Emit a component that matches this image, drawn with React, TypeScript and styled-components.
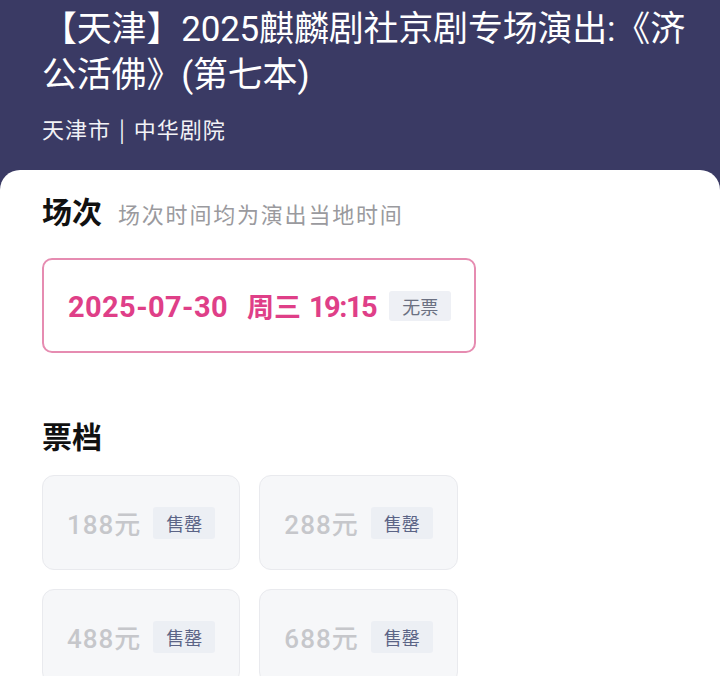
import React from "react";
import styled, { createGlobalStyle } from "styled-components";

const GlobalStyle = createGlobalStyle`
  html, body {
    margin: 0;
    padding: 0;
    background: #3a3a64;
  }
  body {
    font-family: Roboto, "Noto Sans CJK SC", "Noto Sans", sans-serif;
  }
`;

interface Ticket {
  price: number;
  status: string;
}

const tickets: Ticket[] = [
  { price: 188, status: "售罄" },
  { price: 288, status: "售罄" },
  { price: 488, status: "售罄" },
  { price: 688, status: "售罄" },
];

const App: React.FC = () => {
  return (
    <Page>
      <GlobalStyle />
      <Header>
        <Title>【天津】2025麒麟剧社京剧专场演出:《济公活佛》(第七本)</Title>
        <Venue>天津市 | 中华剧院</Venue>
      </Header>
      <Sheet>
        <SectionHead>
          <SectionTitle>场次</SectionTitle>
          <SectionNote>场次时间均为演出当地时间</SectionNote>
        </SectionHead>
        <SessionBox>
          <SessionText>
            <DatePart>2025-07-30</DatePart>
            <WeekPart>周三</WeekPart>
            <TimePart>19:15</TimePart>
          </SessionText>
          <Tag>无票</Tag>
        </SessionBox>
        <SectionHead $top={62}>
          <SectionTitle>票档</SectionTitle>
        </SectionHead>
        <TicketGrid>
          {tickets.map((t) => (
            <TicketCard key={t.price}>
              <Price>{t.price}元</Price>
              <SoldTag>{t.status}</SoldTag>
            </TicketCard>
          ))}
        </TicketGrid>
      </Sheet>
    </Page>
  );
};

export default App;

const Page = styled.div`
  width: 720px;
  height: 676px;
  overflow: hidden;
  background: #3a3a64;
`;

const Header = styled.div`
  padding: 7px 0 0 42px;
  height: 170px;
  box-sizing: border-box;
`;

const Title = styled.h1`
  margin: 0;
  width: 662px;
  color: #ffffff;
  font-family: Roboto, "Noto Sans CJK SC", sans-serif;
  font-weight: 400;
  font-size: 35px;
  line-height: 46px;
  letter-spacing: -0.2px;
`;

const Venue = styled.div`
  margin-top: 14px;
  color: #f2f2f6;
  font-size: 22px;
  line-height: 30px;
  letter-spacing: 1px;
  font-family: "Noto Sans CJK SC", sans-serif;
  word-spacing: 2px;
`;

const Sheet = styled.div`
  background: #ffffff;
  border-radius: 20px 20px 0 0;
  padding: 20px 42px 0 42px;
  min-height: 520px;
`;

const SectionHead = styled.div<{ $top?: number }>`
  display: flex;
  align-items: baseline;
  gap: 16px;
  margin-top: ${({ $top }) => $top ?? 0}px;
`;

const SectionTitle = styled.h2`
  margin: 0;
  font-family: "Noto Sans CJK SC", sans-serif;
  font-size: 30px;
  line-height: 40px;
  font-weight: 700;
  color: #111111;
`;

const SectionNote = styled.span`
  font-family: "Noto Sans CJK SC", sans-serif;
  font-size: 22px;
  color: #9a9a9e;
  letter-spacing: 1.8px;
`;

const SessionBox = styled.div`
  margin-top: 28px;
  display: inline-flex;
  align-items: center;
  gap: 13px;
  height: 95px;
  box-sizing: border-box;
  padding: 0 23px 0 24px;
  border: 2px solid #e68cb1;
  border-radius: 10px;
`;

const SessionText = styled.span`
  display: inline-flex;
  align-items: baseline;
  color: #df3f88;
  font-family: Roboto, "Noto Sans CJK SC", sans-serif;
  font-size: 29px;
  font-weight: 700;
`;

const DatePart = styled.span`
  letter-spacing: 0.4px;
  margin-right: 19px;
`;

const WeekPart = styled.span`
  font-family: "Noto Sans CJK SC", sans-serif;
  font-size: 27px;
  margin-right: 8px;
`;

const TimePart = styled.span`
  letter-spacing: -1.5px;
`;

const Tag = styled.span`
  background: #eef0f5;
  color: #6b7082;
  font-family: "Noto Sans CJK SC", sans-serif;
  font-size: 18px;
  line-height: 30px;
  padding: 0 13px;
  border-radius: 3px;
`;

const TicketGrid = styled.div`
  margin-top: 20px;
  display: flex;
  flex-wrap: wrap;
  gap: 19px;
  width: 450px;
`;

const TicketCard = styled.div`
  display: inline-flex;
  align-items: center;
  gap: 12px;
  height: 95px;
  box-sizing: border-box;
  padding: 0 24px;
  background: #f6f7f9;
  border: 1px solid #e9eaee;
  border-radius: 12px;
`;

const Price = styled.span`
  color: #c6c7cb;
  font-family: Roboto, "Noto Sans CJK SC", sans-serif;
  font-size: 26px;
  font-weight: 500;
  letter-spacing: 1px;
`;

const SoldTag = styled.span`
  background: #eceff4;
  color: #5b6486;
  font-family: "Noto Sans CJK SC", sans-serif;
  font-size: 18px;
  line-height: 32px;
  padding: 0 13px;
  border-radius: 3px;
`;
